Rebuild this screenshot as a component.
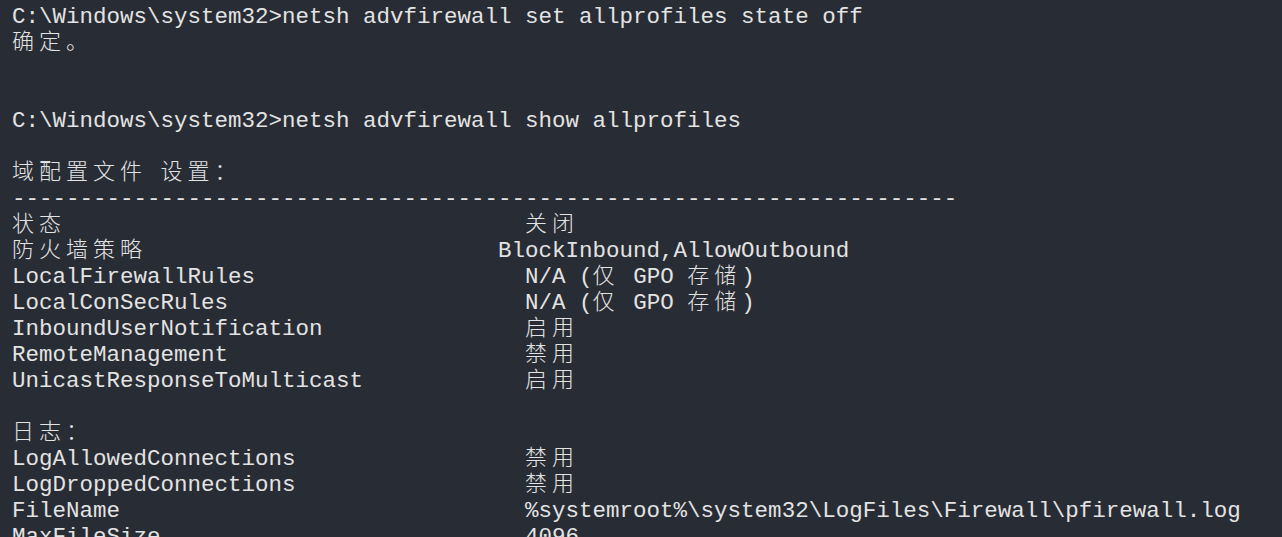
import React from "react";

const pad = (s: string, n = 38) => s + " ".repeat(Math.max(0, n - s.length));

const lines: string[] = [
  "C:\\Windows\\system32>netsh advfirewall set allprofiles state off",
  "确定。",
  "",
  "",
  "C:\\Windows\\system32>netsh advfirewall show allprofiles",
  "",
  "域配置文件 设置：",
  "-".repeat(70),
  "状态" + " ".repeat(34) + "关闭",
  "防火墙策略" + " ".repeat(26) + "BlockInbound,AllowOutbound",
  pad("LocalFirewallRules") + "N/A (仅 GPO 存储)",
  pad("LocalConSecRules") + "N/A (仅 GPO 存储)",
  pad("InboundUserNotification") + "启用",
  pad("RemoteManagement") + "禁用",
  pad("UnicastResponseToMulticast") + "启用",
  "",
  "日志：",
  pad("LogAllowedConnections") + "禁用",
  pad("LogDroppedConnections") + "禁用",
  pad("FileName") + "%systemroot%\\system32\\LogFiles\\Firewall\\pfirewall.log",
  pad("MaxFileSize") + "4096",
];

const isWide = (ch: string) => ch.charCodeAt(0) >= 0x2e80;

// split a line into runs of narrow (ascii) and wide (cjk) cells
function splitRuns(line: string) {
  const runs: { wide: boolean; text: string }[] = [];
  for (const ch of line) {
    const wide = isWide(ch);
    const last = runs[runs.length - 1];
    if (last && last.wide === wide) last.text += ch;
    else runs.push({ wide, text: ch });
  }
  return runs;
}

function TermLine({ text }: { text: string }) {
  return (
    <div className="h-[26px] whitespace-pre">
      {splitRuns(text).map((r, i) =>
        r.wide ? (
          <span
            key={i}
            className="inline-block align-top h-[26px] leading-[18px] font-['Noto_Sans_CJK_SC',sans-serif] text-[22px] tracking-[5px] font-light"
          >
            {r.text}
          </span>
        ) : (
          <span
            key={i}
            className="inline-block align-top h-[26px] leading-[26px] font-['Courier_New','Nimbus_Mono_PS','FreeMono','Liberation_Mono',monospace] text-[22.5px]"
          >
            {r.text}
          </span>
        )
      )}
    </div>
  );
}

export default function App() {
  return (
    <div className="w-[1282px] h-[537px] overflow-hidden bg-[#282c34] text-[#e3e3e3] pl-[12px] pt-[4px]">
      {lines.map((l, i) => (
        <TermLine key={i} text={l} />
      ))}
    </div>
  );
}
